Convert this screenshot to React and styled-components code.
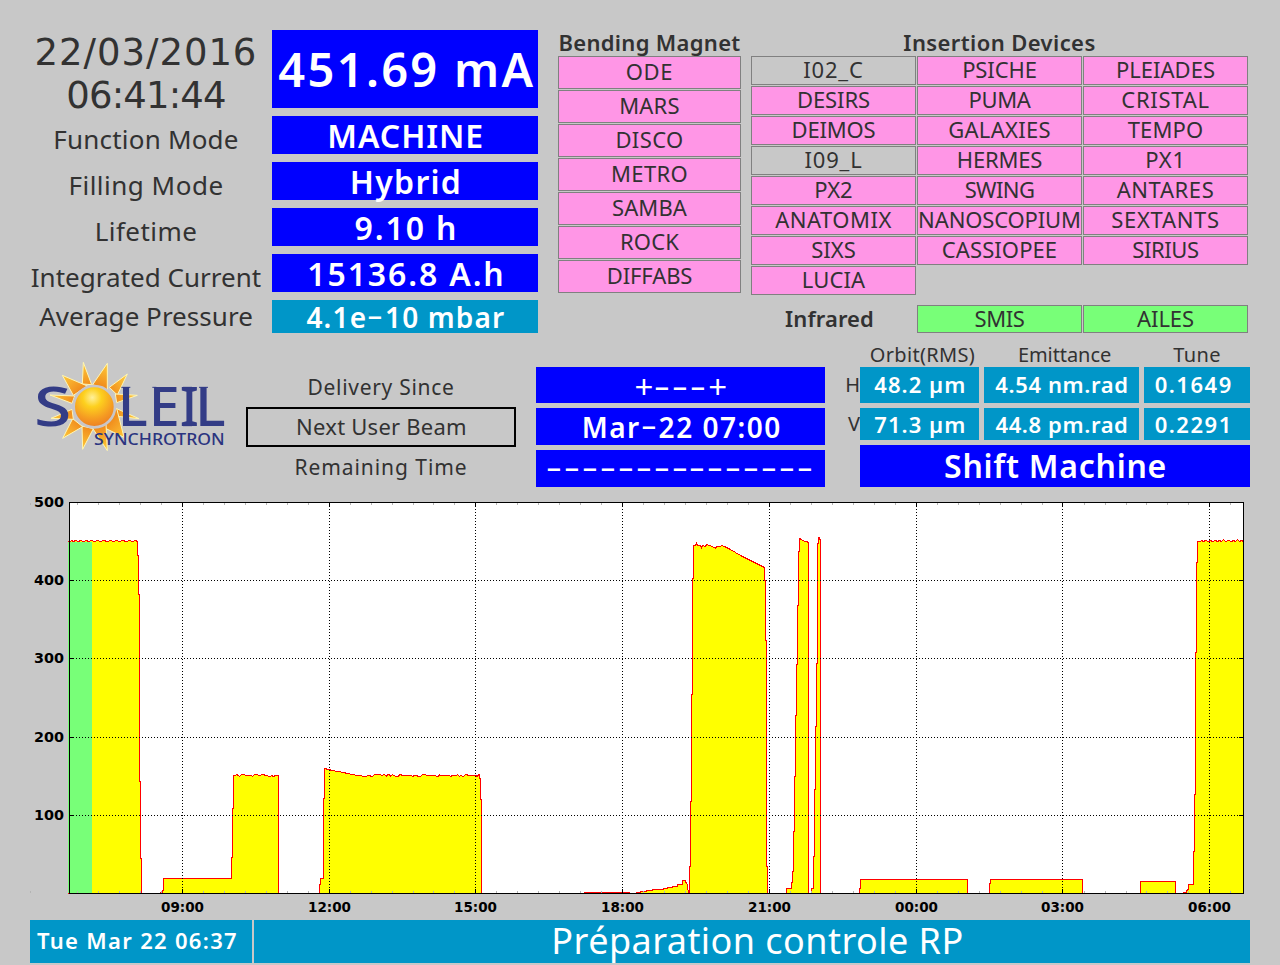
import { Fragment } from "react";
import styled, { createGlobalStyle, css } from "styled-components";

const readouts = [
  { label: "Function Mode", ls: 0.2, value: "MACHINE", vls: 0.93 },
  { label: "Filling Mode", ls: 0.5, value: "Hybrid", vls: 1.26 },
  { label: "Lifetime", ls: 0.45, value: "9.10 h", vls: 1.89 },
  { label: "Integrated Current", ls: 0.02, value: "15136.8 A.h", vls: 1.87 },
];

const bendingMagnets = [
  ["ODE", 0.7],
  ["MARS", 0.2],
  ["DISCO", 0.4],
  ["METRO", 0.3],
  ["SAMBA", 0.1],
  ["ROCK", 0.2],
  ["DIFFABS", -0.1],
];

const insertionDevices = [
  ["I02_C", 0.8, "off"],
  ["PSICHE", -0.1],
  ["PLEIADES", 0],
  ["DESIRS", -0.1],
  ["PUMA", -0.4],
  ["CRISTAL", 0.7],
  ["DEIMOS", -0.2],
  ["GALAXIES", 0.3],
  ["TEMPO", 0.1],
  ["I09_L", 0.8, "off"],
  ["HERMES", -0.2],
  ["PX1", 0.8],
  ["PX2", 0],
  ["SWING", -0.6],
  ["ANTARES", 0.6],
  ["ANATOMIX", 0.5],
  ["NANOSCOPIUM", -0.13],
  ["SEXTANTS", 0.7],
  ["SIXS", 0],
  ["CASSIOPEE", 0.09],
  ["SIRIUS", -0.4],
  ["LUCIA", 0.1],
];

const cellColors = {
  on: "#ff96e6",
  off: "#c8c8c8",
  infrared: "#78ff78",
};

// Beam current outlines, in plot pixels; each run starts and ends on the axis
const beamRuns = [
  "68,893 68,541 70,541 71,540 73,541 75,540 78,541 80,540 83,541 86,540 88,541 91,540 94,541 97,540 100,541 103,540 107,541 110,540 113,541 116,540 119,541 122,540 126,541 129,540 132,541 135,540 137,541 137,555 138,555 138,594 139,594 139,781 140,781 140,858 141,858 141,893",
  "160,893 160,892 162,892 162,890 163,890 163,878 231,878 231,857 232,857 232,808 233,808 233,775 235,775 236,774 238,775 239,776 241,774 244,774 245,775 251,775 252,776 254,774 257,774 258,775 260,775 261,774 263,774 265,775 270,776 271,775 273,776 275,775 278,775 278,893",
  "319,893 319,884 320,884 320,878 323,878 323,798 324,798 324,768 328,769 332,770 337,771 343,772 347,773 352,774 357,775 365,776 368,775 372,776 374,774 380,774 381,775 384,774 386,776 387,774 389,774 390,776 392,774 395,776 398,776 399,774 403,775 411,775 412,776 414,775 420,776 422,774 425,774 426,775 435,775 436,776 438,776 439,774 440,775 449,775 450,776 452,775 456,775 457,774 459,776 460,775 463,776 465,774 469,775 475,775 477,776 478,774 479,774 479,778 480,778 480,799 481,799 481,893",
  "584,893 584,892 629,892 629,893",
  "636,893 636,892 640,892 640,891 646,891 646,890 652,890 652,889 663,889 663,888 667,888 667,887 672,887 672,886 677,886 677,884 682,884 682,880 685,880 685,882 686,882 687,885 688,893",
  "689,893 689,866 690,866 690,801 691,801 691,694 692,694 692,578 693,578 693,545 695,545 696,543 697,545 700,545 701,547 702,545 705,546 706,544 709,545 712,546 715,548 716,546 720,546 721,545 724,546 730,549 740,555 750,560 760,565 764,567 764,580 765,580 765,640 766,640 766,866 767,866 767,893",
  "786,893 786,888 791,888 791,882 792,882 792,871 793,871 793,831 794,831 794,776 795,776 795,715 796,715 796,664 797,664 797,605 798,605 798,551 799,551 799,538 801,539 804,541 806,541 808,542 808,893",
  "811,893 811,888 813,888 813,856 814,856 814,789 815,789 815,726 816,726 816,663 817,663 817,543 818,543 818,537 819,537 819,539 820,539 820,893",
  "859,893 859,888 860,888 860,879 967,879 967,893",
  "989,893 989,883 990,883 990,879 1082,879 1082,893",
  "1140,893 1140,881 1175,881 1175,893",
  "1183,893 1183,892 1186,892 1186,890 1187,890 1187,889 1188,889 1188,884 1193,884 1193,851 1194,851 1194,794 1195,794 1195,652 1196,652 1196,562 1197,562 1197,541 1200,541 1201,540 1203,541 1205,540 1208,541 1210,540 1212,541 1215,540 1217,541 1219,540 1221,541 1223,539 1225,541 1228,540 1231,541 1233,540 1235,541 1237,539 1239,541 1241,540 1243,541 1243,893",
];

const hours = [
  [182, "09:00"],
  [329, "12:00"],
  [475, "15:00"],
  [622, "18:00"],
  [769, "21:00"],
  [916, "00:00"],
  [1062, "03:00"],
  [1209, "06:00"],
];
const levels = [
  [502, 500],
  [580, 400],
  [658, 300],
  [737, 200],
  [815, 100],
];
const minorTicks = Array.from({ length: 56 }, (_, i) => Math.round(77 + i * 20.97)).filter(
  (x) => !hours.some(([h]) => Math.abs(h - x) < 4)
);

const rays = [
  "190,67 187,132 215,134",
  "262,70 218,134 262,150",
  "322,102 268,142 292,165",
  "352,166 286,162 290,188",
  "357,236 290,206 284,228",
  "312,292 290,205 250,262",
  "262,332 216,262 258,252",
  "188,328 186,258 220,266",
  "128,295 158,236 188,260",
  "93,235 156,208 160,238",
  "90,165 164,168 156,190",
  "127,106 160,166 202,138",
];

// The dash of the display is wider and higher than the font's own hyphen
function Dashed({ children }) {
  return children.split("-").map((part, i) => (
    <Fragment key={i}>
      {i > 0 && <Hyphen>-</Hyphen>}
      {part}
    </Fragment>
  ));
}

function Logo() {
  return (
    <LogoArt viewBox="30 54 630 297">
      <defs>
        <radialGradient id="sun" cx="0.45" cy="0.28" r="0.75">
          <stop offset="0" stopColor="#fff09a" />
          <stop offset="0.3" stopColor="#fdd01e" />
          <stop offset="0.7" stopColor="#f59a22" />
          <stop offset="1" stopColor="#ec7a22" />
        </radialGradient>
        <radialGradient id="ray" gradientUnits="userSpaceOnUse" cx="222" cy="200" r="140">
          <stop offset="0.45" stopColor="#f08a1c" />
          <stop offset="1" stopColor="#ffcf3c" />
        </radialGradient>
      </defs>
      {rays.map((points) => (
        <polygon key={points} points={points} fill="url(#ray)" stroke="#fff6b4" strokeWidth="3" />
      ))}
      <circle cx="223" cy="200" r="62" fill="url(#sun)" stroke="#c9c6c8" strokeWidth="8" />
      <LogoName x="42" y="258" textLength="112">S</LogoName>
      <LogoName x="293" y="258" textLength="90">L</LogoName>
      <LogoName x="386" y="258" textLength="93">E</LogoName>
      <LogoName x="479" y="258">I</LogoName>
      <LogoName x="525" y="258" textLength="92">L</LogoName>
      <path
        d="M304 142h27M397 142h12M489 142h27M489 257h27M537 142h27"
        stroke="#333c86"
        strokeWidth="3"
      />
      <LogoSub x="222" y="315" textLength="392">SYNCHROTRON</LogoSub>
    </LogoArt>
  );
}

function CurrentChart() {
  return (
    <ChartArt viewBox="30 497 1220 420">
      <rect x="69" y="502" width="1174" height="391" fill="#fff" />
      <g shapeRendering="crispEdges">
        <g transform="translate(0.5 0.5)">
          {beamRuns.map((points) => (
            <polyline key={points} points={points} fill="#ff0" stroke="#f00" />
          ))}
        </g>
        <rect x="68" y="542" width="24" height="351" fill="#78ff78" />
        {minorTicks.map((x) => (
          <path key={x} d={`M${x + 0.5} 503v2M${x + 0.5} 891v2`} stroke="#b4b4b4" />
        ))}
        <path d="M30.5 503v2M30.5 891v2" stroke="#b4b4b4" />
        {hours.map(([x]) => (
          <g key={x} stroke="#000">
            <path d={`M${x + 0.5} 503V893`} strokeDasharray="1 2" />
            <path d={`M${x + 0.5} 503v4M${x + 0.5} 889v4`} />
          </g>
        ))}
        {levels.slice(1).map(([y]) => (
          <g key={y} stroke="#000">
            <path d={`M70 ${y + 0.5}H1243`} strokeDasharray="1 2" />
            <path d={`M70 ${y + 0.5}h4M1239 ${y + 0.5}h4`} />
          </g>
        ))}
        <rect x="69.5" y="502.5" width="1174" height="391" fill="none" stroke="#000" />
      </g>
      {levels.map(([y, text]) => (
        <AxisText key={y} x="34" y={y + 5} textLength="30">
          {text}
        </AxisText>
      ))}
      {hours.map(([x, text]) => (
        <AxisText key={x} x={x - 21} y="912" textLength="43">
          {text}
        </AxisText>
      ))}
    </ChartArt>
  );
}

export default function App() {
  return (
    <Page>
      <GlobalStyle />
      <TopRow>
        <Readouts>
          <Clock>
            <Digits $ls={0.95}>22/03/2016</Digits>
            <Digits $ls={-0.85}>06:41:44</Digits>
          </Clock>
          <Value $size={47} $ls={2.3} $drop={1}>
            <span>451.69 mA</span>
          </Value>
          {readouts.map((r) => (
            <Fragment key={r.label}>
              <Label $ls={r.ls} $drop={8}>
                <span>{r.label}</span>
              </Label>
              <Value $size={32} $ls={r.vls} $drop={2}>
                <span>{r.value}</span>
              </Value>
            </Fragment>
          ))}
          <Label $ls={0.03} $lift={2}>
            <span>Average Pressure</span>
          </Label>
          <Value $size={28} $ls={1.15} $tone="cyan">
            <span>
              <Dashed>4.1e-10 mbar</Dashed>
            </span>
          </Value>
        </Readouts>

        <Beamlines $width={183}>
          <Title $ls={0.31}>Bending Magnet</Title>
          <CellGrid $cols={1} $rowHeight={33}>
            {bendingMagnets.map(([name, ls]) => (
              <Cell key={name} $state="on" $ls={ls}>
                <span>{name}</span>
              </Cell>
            ))}
          </CellGrid>
        </Beamlines>

        <Beamlines $width={497}>
          <Title $ls={0.4}>Insertion Devices</Title>
          <CellGrid $cols={3} $rowHeight={29}>
            {insertionDevices.map(([name, ls, state = "on"]) => (
              <Cell key={name} $state={state} $ls={ls}>
                <span>{name}</span>
              </Cell>
            ))}
          </CellGrid>
          <InfraredGrid>
            <InfraredTitle>Infrared</InfraredTitle>
            <Cell $state="infrared" $ls={-0.4}>
              <span>SMIS</span>
            </Cell>
            <Cell $state="infrared" $ls={-0.1}>
              <span>AILES</span>
            </Cell>
          </InfraredGrid>
        </Beamlines>
      </TopRow>

      <MiddleRow>
        <Logo />
        <Schedule>
          <ScheduleLabel $size={21} $ls={0.7}>Delivery Since</ScheduleLabel>
          <ScheduleLabel $size={22} $ls={0.24} $boxed>
            Next User Beam
          </ScheduleLabel>
          <ScheduleLabel $size={21} $ls={0.94}>Remaining Time</ScheduleLabel>
        </Schedule>
        <ScheduleValues>
          <Value $size={33} $ls={1} $weight={400}>
            <PlusLine>
              <Dashed>+---+</Dashed>
            </PlusLine>
          </Value>
          <Value $size={28} $ls={1.5}>
            <span>
              <Dashed>Mar-22 07:00</Dashed>
            </span>
          </Value>
          <Value $size={28} $ls={0}>
            <span>
              <Dashed>---------------</Dashed>
            </span>
          </Value>
        </ScheduleValues>
        <Optics>
          <span />
          <Heading $ls={0.32} $shift={6}>Orbit(RMS)</Heading>
          <Heading $ls={-0.07} $shift={6}>Emittance</Heading>
          <Heading $ls={0.39} $shift={0}>Tune</Heading>
          <Plane>H</Plane>
          <Value $size={22} $ls={1.06} $lift={2} $tone="cyan"><span>48.2 µm</span></Value>
          <Value $size={22} $ls={0.62} $lift={2} $tone="cyan"><span>4.54 nm.rad</span></Value>
          <Tune $size={22} $ls={1.52} $lift={2} $tone="cyan"><span>0.1649</span></Tune>
          <Plane>V</Plane>
          <Value $size={22} $ls={1.06} $lift={1} $tone="cyan"><span>71.3 µm</span></Value>
          <Value $size={22} $ls={0.62} $lift={1} $tone="cyan"><span>44.8 pm.rad</span></Value>
          <Tune $size={22} $ls={1.52} $lift={1} $tone="cyan"><span>0.2291</span></Tune>
          <Shift $size={32} $ls={0.74}><span>Shift Machine</span></Shift>
        </Optics>
      </MiddleRow>

      <CurrentChart />

      <Footer>
        <Stamp>Tue Mar 22 06:37</Stamp>
        <Message>Préparation controle RP</Message>
      </Footer>
    </Page>
  );
}

const GlobalStyle = createGlobalStyle`
  body {
    margin: 0;
    background: #c8c8c8;
  }
`;

const centered = css`
  display: flex;
  align-items: center;
  justify-content: center;
  white-space: nowrap;
`;

const Page = styled.main`
  box-sizing: border-box;
  width: 1280px;
  height: 965px;
  padding: 30px 30px 2px;
  overflow: hidden;
  background: #c8c8c8;
  color: #323232;
  font-family: "Noto Sans", "Open Sans", sans-serif;
  line-height: 1;
`;

const TopRow = styled.section`
  display: flex;
  height: 303px;
`;

const Readouts = styled.div`
  display: grid;
  flex: none;
  grid-template-columns: 232px 266px;
  grid-template-rows: 78px repeat(4, 38px) 33px;
  gap: 8px 10px;
  margin-right: 20px;
`;

const Clock = styled.div`
  display: flex;
  flex-direction: column;
  align-items: center;
  padding-top: 1px;
`;

const Digits = styled.div`
  font-family: "DejaVu Sans", sans-serif;
  font-size: 37px;
  line-height: 43px;
  letter-spacing: ${(p) => p.$ls}px;
`;

const Label = styled.div`
  ${centered}
  padding-top: ${(p) => p.$drop || 0}px;
  padding-bottom: ${(p) => p.$lift || 0}px;
  font-size: 26px;
  letter-spacing: ${(p) => p.$ls}px;
`;

const Value = styled.div`
  ${centered}
  box-sizing: border-box;
  padding: ${(p) => p.$drop || 0}px 0 ${(p) => p.$lift || 0}px ${(p) => p.$ls * 1.6}px;
  background: ${(p) => (p.$tone === "cyan" ? "#0096c8" : "#0000ff")};
  color: #fff;
  font-size: ${(p) => p.$size}px;
  font-weight: ${(p) => p.$weight || 600};
  letter-spacing: ${(p) => p.$ls}px;
`;

const Hyphen = styled.span`
  display: inline-block;
  width: 0.64em;
  margin: 0 1px 0 -1px;
  text-align: center;
  font-size: 28px;
  letter-spacing: 0;
  font-weight: 600;
  transform: translateY(-2px) scale(1.7, 0.85);
`;

const Beamlines = styled.div`
  flex: none;
  width: ${(p) => p.$width}px;
  margin-right: 10px;
`;

const Title = styled.h2`
  margin: 0;
  padding-bottom: 1px;
  text-align: center;
  white-space: nowrap;
  font-size: 22px;
  font-weight: 600;
  line-height: 25px;
  letter-spacing: ${(p) => p.$ls}px;
`;

const CellGrid = styled.div`
  display: grid;
  grid-template-columns: repeat(${(p) => p.$cols}, minmax(0, 1fr));
  grid-auto-rows: ${(p) => p.$rowHeight}px;
  gap: 1px;
`;

const InfraredGrid = styled(CellGrid).attrs({ $cols: 3, $rowHeight: 28 })`
  margin-top: 10px;
`;

const Cell = styled.div`
  ${centered}
  box-sizing: border-box;
  padding-bottom: ${(p) => (p.$state === "infrared" ? 2 : 3)}px;
  border: 1px solid #808080;
  background: ${(p) => cellColors[p.$state]};
  font-size: 22px;
  letter-spacing: ${(p) => p.$ls}px;
`;

const InfraredTitle = styled.div`
  ${centered}
  padding: 0 8px 2px 0;
  font-size: 22px;
  font-weight: 600;
  letter-spacing: 0.1px;
`;

const MiddleRow = styled.section`
  display: flex;
  align-items: flex-end;
  height: 154px;
`;

const LogoArt = styled.svg`
  width: 210px;
  height: 99px;
  margin: 0 6px 30px 0;
`;

const LogoName = styled.text.attrs({ lengthAdjust: "spacingAndGlyphs" })`
  fill: #333c86;
  font-size: 163px;
  font-weight: 500;
`;

const LogoSub = styled.text.attrs({ lengthAdjust: "spacingAndGlyphs" })`
  fill: #2b3480;
  font-size: 50px;
  font-weight: 500;
`;

const Schedule = styled.div`
  display: grid;
  grid-template-rows: repeat(3, 40px);
  width: 270px;
  margin-right: 20px;
`;

const ScheduleLabel = styled.div`
  ${centered}
  font-size: ${(p) => p.$size}px;
  letter-spacing: ${(p) => p.$ls}px;
  ${(p) => p.$boxed && "padding: 0 0 2px 1px; border: 2px solid #000;"}
`;

const ScheduleValues = styled.div`
  display: grid;
  grid-template-rows: 36px 37px 37px;
  gap: 5px;
  width: 289px;
  margin-right: 15px;
`;

const PlusLine = styled.span`
  padding-top: 3px;
`;

const Optics = styled.div`
  display: grid;
  grid-template-columns: 15px 119px 155px 106px;
  grid-template-rows: 17px 36px 32px 42px;
  gap: 5px;
`;

const Heading = styled.div`
  ${centered}
  padding: 2px 0 0 ${(p) => p.$shift}px;
  font-size: 20px;
  letter-spacing: ${(p) => p.$ls}px;
`;

const Plane = styled.div`
  display: flex;
  align-items: center;
  justify-content: flex-end;
  margin-right: -5px;
  font-size: 20px;
`;

const Tune = styled(Value)`
  padding-right: 9px;
`;

const Shift = styled(Value)`
  grid-column: 2 / -1;
`;

const ChartArt = styled.svg`
  display: block;
  width: 1220px;
  height: 420px;
  margin: 10px 0 3px;
`;

const AxisText = styled.text.attrs({ lengthAdjust: "spacingAndGlyphs" })`
  fill: #000;
  font-family: "DejaVu Sans", sans-serif;
  font-size: 14px;
  font-weight: 700;
`;

const Footer = styled.footer`
  display: flex;
  gap: 2px;
  height: 43px;
  color: #fff;
`;

const Stamp = styled.div`
  ${centered}
  box-sizing: border-box;
  width: 222px;
  padding: 0 7px 3px 0;
  background: #0096c8;
  font-size: 22px;
  font-weight: 600;
  letter-spacing: 1.31px;
`;

const Message = styled.div`
  ${centered}
  flex: 1;
  padding: 0 0 1px 11px;
  background: #0096c8;
  font-size: 36px;
  letter-spacing: 0.45px;
`;
